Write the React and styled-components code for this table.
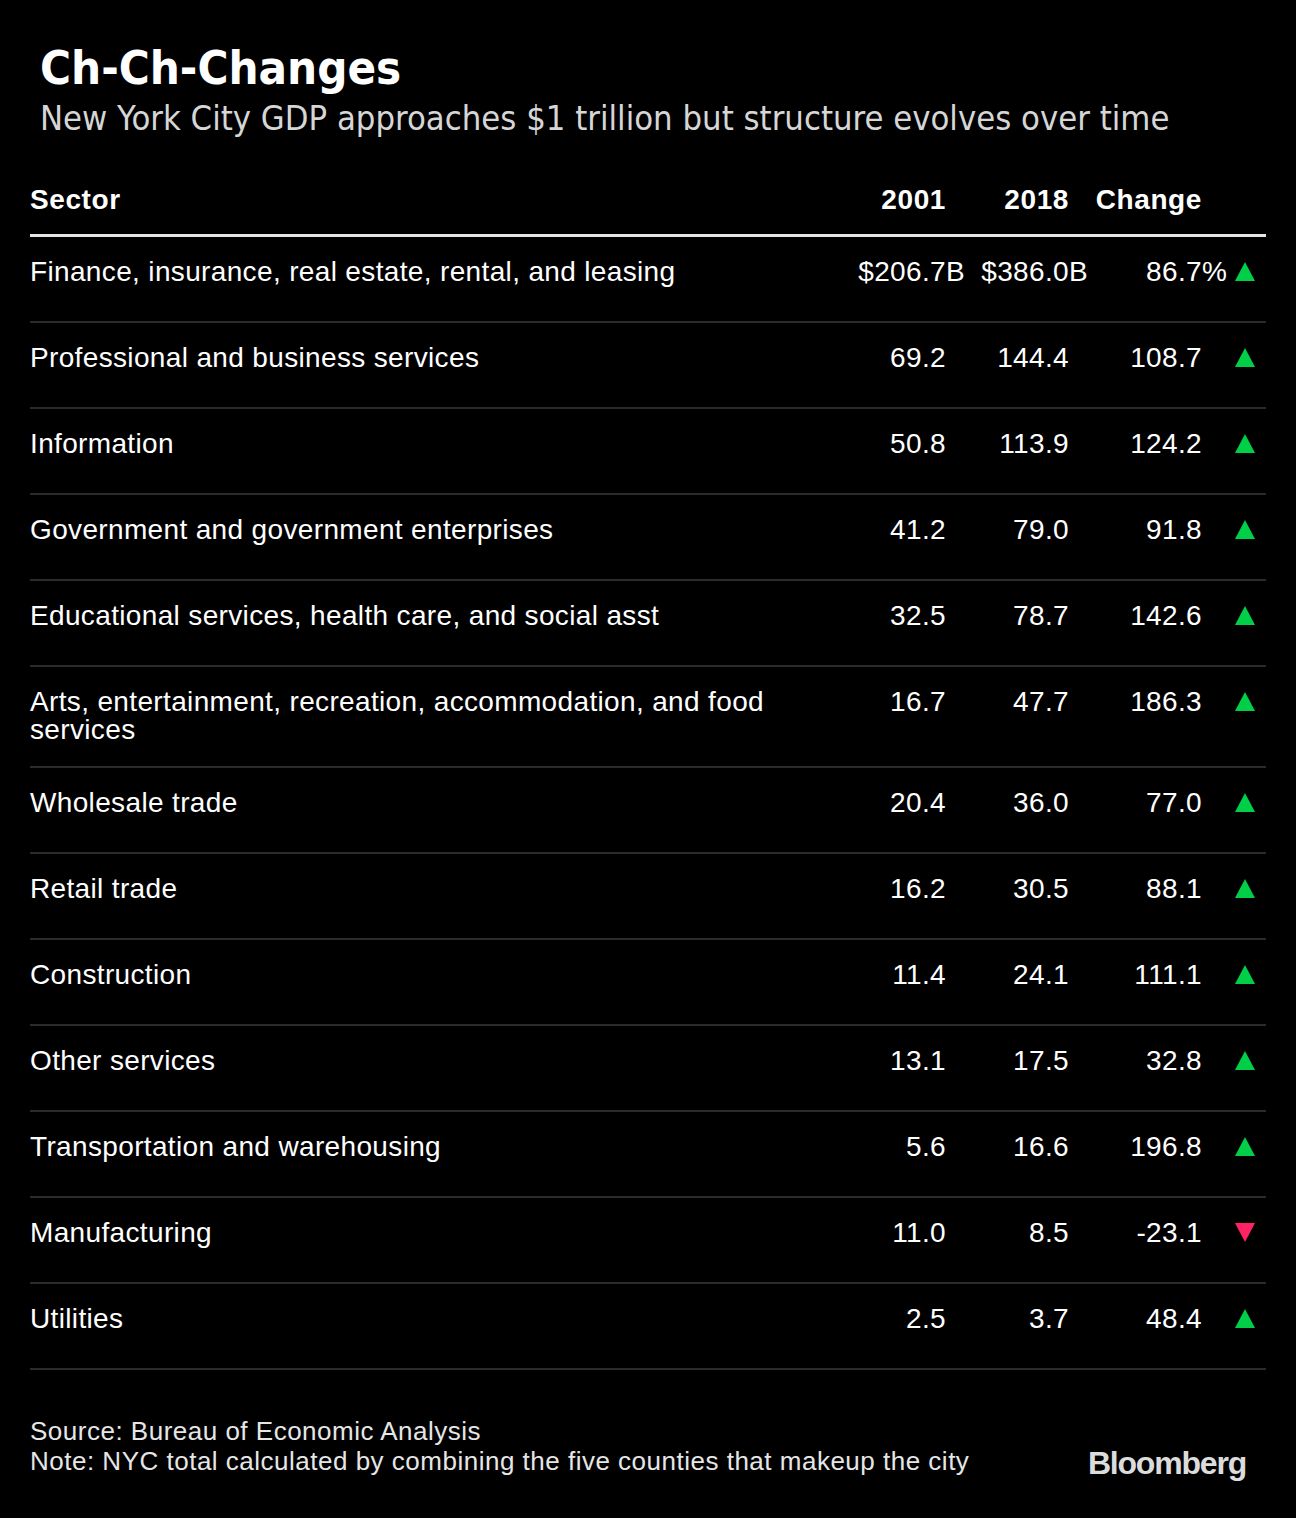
import React from "react";
import styled, { createGlobalStyle } from "styled-components";

const GlobalStyle = createGlobalStyle`
  html, body {
    margin: 0;
    padding: 0;
    background: #000;
  }
  body {
    font-family: "Liberation Sans", Arial, sans-serif;
    color: #fff;
  }
`;

const Page = styled.div`
  width: 1296px;
  min-height: 1518px;
  background: #000;
  box-sizing: border-box;
  padding: 42px 30px 0 30px;
`;

const Title = styled.h1`
  margin: 0 0 0 10px;
  font-family: "DejaVu Sans Condensed", "DejaVu Sans", sans-serif;
  font-weight: 700;
  font-size: 47px;
  line-height: 52px;
  color: #fff;
`;

const Subtitle = styled.p`
  margin: 0 0 0 10px;
  font-family: "DejaVu Sans Condensed", "DejaVu Sans", sans-serif;
  font-size: 34.3px;
  line-height: 48px;
  color: #d6d6d6;
  white-space: nowrap;
`;

const Table = styled.div`
  margin-top: 44px;
`;

const Row = styled.div`
  display: grid;
  grid-template-columns: 1fr 120px 123px 133px 64px;
  align-items: start;
  box-sizing: border-box;
  min-height: ${p => (p.$head ? "auto" : "86px")};
  padding: ${p => (p.$head ? "0 0 20px" : "21px 0 22px")};
  border-bottom: ${p => (p.$head ? "3px solid #e6e6e6" : "2px solid #2c2a2b")};
  font-size: 28px;
  line-height: 28px;
  letter-spacing: ${p => (p.$head ? "0.6px" : "0.35px")};
  font-weight: ${p => (p.$head ? 700 : 400)};
`;

const Sector = styled.div`
  padding-right: 40px;
`;

const Num = styled.div`
  text-align: right;
  white-space: nowrap;
`;

const Suffix = styled.span`
  display: inline-block;
  width: 0;
  overflow: visible;
`;

const ArrowCell = styled.div`
  display: flex;
  justify-content: flex-end;
  padding-right: 11px;
  padding-top: 4px;
`;

const Arrow = styled.span`
  width: 0;
  height: 0;
  border-left: 10px solid transparent;
  border-right: 10px solid transparent;
  ${p =>
    p.$down
      ? "border-top: 19px solid #ff2366;"
      : "border-bottom: 19px solid #00cf47;"}
`;

const Footer = styled.div`
  display: flex;
  justify-content: space-between;
  align-items: flex-end;
  margin-top: 46px;
  font-size: 26px;
  line-height: 30px;
  letter-spacing: 0.5px;
  color: #e6e6e6;
`;

const Notes = styled.div``;

const Logo = styled.div`
  font-family: "Liberation Sans", Arial, sans-serif;
  font-weight: 700;
  font-size: 32px;
  letter-spacing: -1.2px;
  color: #dcdcdc;
  margin-right: 20px;
  line-height: 30px;
  margin-bottom: -2px;
`;

const rows = [
  ["Finance, insurance, real estate, rental, and leasing", "206.7", "386.0", "86.7", "up", true],
  ["Professional and business services", "69.2", "144.4", "108.7", "up"],
  ["Information", "50.8", "113.9", "124.2", "up"],
  ["Government and government enterprises", "41.2", "79.0", "91.8", "up"],
  ["Educational services, health care, and social asst", "32.5", "78.7", "142.6", "up"],
  ["Arts, entertainment, recreation, accommodation, and food services", "16.7", "47.7", "186.3", "up"],
  ["Wholesale trade", "20.4", "36.0", "77.0", "up"],
  ["Retail trade", "16.2", "30.5", "88.1", "up"],
  ["Construction", "11.4", "24.1", "111.1", "up"],
  ["Other services", "13.1", "17.5", "32.8", "up"],
  ["Transportation and warehousing", "5.6", "16.6", "196.8", "up"],
  ["Manufacturing", "11.0", "8.5", "-23.1", "down"],
  ["Utilities", "2.5", "3.7", "48.4", "up"],
];

export default function App() {
  return (
    <>
      <GlobalStyle />
      <Page>
        <Title>Ch-Ch-Changes</Title>
        <Subtitle>New York City GDP approaches $1 trillion but structure evolves over time</Subtitle>

        <Table>
          <Row $head>
            <Sector>Sector</Sector>
            <Num>2001</Num>
            <Num>2018</Num>
            <Num>Change</Num>
            <div />
          </Row>
          {rows.map(([name, a, b, c, dir, units]) => (
            <Row key={name}>
              <Sector>{name}</Sector>
              <Num>
                {units ? "$" : ""}
                {a}
                {units && <Suffix>B</Suffix>}
              </Num>
              <Num>
                {units ? "$" : ""}
                {b}
                {units && <Suffix>B</Suffix>}
              </Num>
              <Num>
                {c}
                {units && <Suffix>%</Suffix>}
              </Num>
              <ArrowCell>
                <Arrow $down={dir === "down"} />
              </ArrowCell>
            </Row>
          ))}
        </Table>

        <Footer>
          <Notes>
            <div>Source: Bureau of Economic Analysis</div>
            <div>Note: NYC total calculated by combining the five counties that makeup the city</div>
          </Notes>
          <Logo>Bloomberg</Logo>
        </Footer>
      </Page>
    </>
  );
}
